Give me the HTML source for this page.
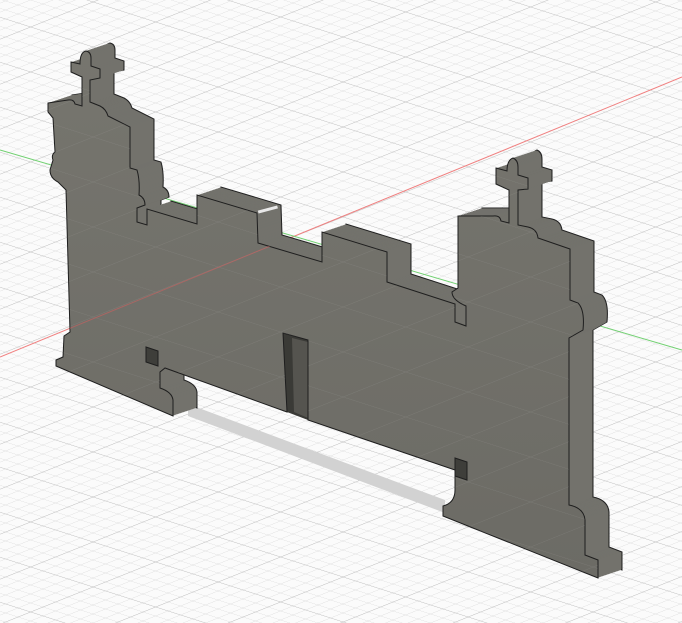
<!DOCTYPE html>
<html><head><meta charset="utf-8"><style>
html,body{margin:0;padding:0;background:#fbfbfb;overflow:hidden}
svg{display:block}
</style></head><body>
<svg width="682" height="623" viewBox="0 0 682 623" xmlns="http://www.w3.org/2000/svg">
<defs>
<pattern id="gmin" width="10" height="10" patternUnits="userSpaceOnUse" patternTransform="matrix(1.25 0.4 1.25 -0.5 280 242)">
<path d="M0 0H10M0 0V10" stroke="#d8d8d8" stroke-width="0.8" fill="none" vector-effect="non-scaling-stroke"/>
</pattern>
<pattern id="gmaj" width="50" height="50" patternUnits="userSpaceOnUse" patternTransform="matrix(1.25 0.4 1.25 -0.5 280 242)">
<path d="M0 0H50M0 0V50" stroke="#bcbcbc" stroke-width="1" fill="none" vector-effect="non-scaling-stroke"/>
</pattern>
<path id="f" d="M48,103 L68,100 Q74,99 75,104 L82,106 L82,77 L71,72 L71,62 L80,64 Q80,52 86,51 Q91,52 91,58 L91,66 L100,69 L100,78 L90,80 L90,102 L100,106 Q106,109 108,116 L130,127 L130,168 L137,170 Q140,180 139,195 Q145,198 145,205 L137,208 L137,222 L147,225 L147,209 L197,224 L197,195 L257,213 L258,243 L322,262 L322,232 L387,252 L387,282 L455,304 L455,322 L466,326 L466,306 Q452,300 452,292 L458,288 L458,216 L493,216 Q500,215 501,221 L509,223 L509,190 L496,184 L496,168 L507,171 Q507,160 513,158 Q518,160 518,167 L518,175 L528,178 L528,189 L518,190 L518,225 L528,227 Q537,229 538,238 L570,249 L570,300 L578,303 Q585,310 583,330 L569,338 L569,505 Q584,508 585,520 L585,555 L598,560 L598,578 L443,516 L443,506 Q455,503 455,490 L455,470 L308,420 L308,340 L283,333 L287,412 L165,368 L160,372 L160,388 Q172,392 173,400 L173,416 L56,366 L56,360 L63,357 L64,336 L70,332 L66,190 L58,182 Q50,178 50,170 L53,160 Q51,155 55,152 L53,118 L48,112 Z"/>
<clipPath id="fc"><use href="#f"/></clipPath>
<linearGradient id="ff" x1="0" y1="0" x2="0" y2="1">
<stop offset="0" stop-color="#76756e"/><stop offset="1" stop-color="#6c6b65"/>
</linearGradient>
</defs>
<rect width="682" height="623" fill="#fbfbfb"/>
<rect width="682" height="623" fill="url(#gmin)"/>
<rect width="682" height="623" fill="url(#gmaj)"/>
<line x1="0" y1="357" x2="682" y2="77" stroke="#f08080" stroke-width="1"/>
<line x1="0" y1="150" x2="682" y2="350" stroke="#70d070" stroke-width="1"/>
<polygon points="188,404 445,500 445,513 188,416" fill="#d2d2d2"/>
<g fill="#6a6963" stroke="#222" stroke-width="1">
<use href="#f" transform="translate(24,-8)"/>
</g>
<g fill="#73726c">
<use href="#f" transform="translate(23,-7.67)"/>
<use href="#f" transform="translate(22,-7.33)"/>
<use href="#f" transform="translate(21,-7)"/>
<use href="#f" transform="translate(20,-6.67)"/>
<use href="#f" transform="translate(19,-6.33)"/>
<use href="#f" transform="translate(18,-6)"/>
<use href="#f" transform="translate(17,-5.67)"/>
<use href="#f" transform="translate(16,-5.33)"/>
<use href="#f" transform="translate(15,-5)"/>
<use href="#f" transform="translate(14,-4.67)"/>
<use href="#f" transform="translate(13,-4.33)"/>
<use href="#f" transform="translate(12,-4)"/>
<use href="#f" transform="translate(11,-3.67)"/>
<use href="#f" transform="translate(10,-3.33)"/>
<use href="#f" transform="translate(9,-3)"/>
<use href="#f" transform="translate(8,-2.67)"/>
<use href="#f" transform="translate(7,-2.33)"/>
<use href="#f" transform="translate(6,-2)"/>
<use href="#f" transform="translate(5,-1.67)"/>
<use href="#f" transform="translate(4,-1.33)"/>
<use href="#f" transform="translate(3,-1)"/>
<use href="#f" transform="translate(2,-0.67)"/>
<use href="#f" transform="translate(1,-0.33)"/>
</g>
<polygon points="283,333 308,340 308,420 287,412" fill="#3a3a36"/>
<polygon points="292,338 308,342 308,418 294,412" fill="#55544f"/>
<use href="#f" fill="url(#ff)" stroke="#1e1e1e" stroke-width="1"/>
<g clip-path="url(#fc)" opacity="0.18">
<rect width="682" height="623" fill="url(#gmaj)"/>
</g>
<g clip-path="url(#fc)">
<line x1="0" y1="357" x2="682" y2="77" stroke="#d06060" stroke-width="1" opacity="0.6"/>
</g>
<polygon points="146,347 158,351 158,366 146,362" fill="#3e3e3a" stroke="#1e1e1e" stroke-width="1"/>
<polygon points="455,458 467,462 467,480 455,476" fill="#3e3e3a" stroke="#1e1e1e" stroke-width="1"/>
<rect x="258" y="208" width="20" height="3" fill="#e8e8e8" transform="rotate(-15 268 210)"/>
</svg>
</body></html>
